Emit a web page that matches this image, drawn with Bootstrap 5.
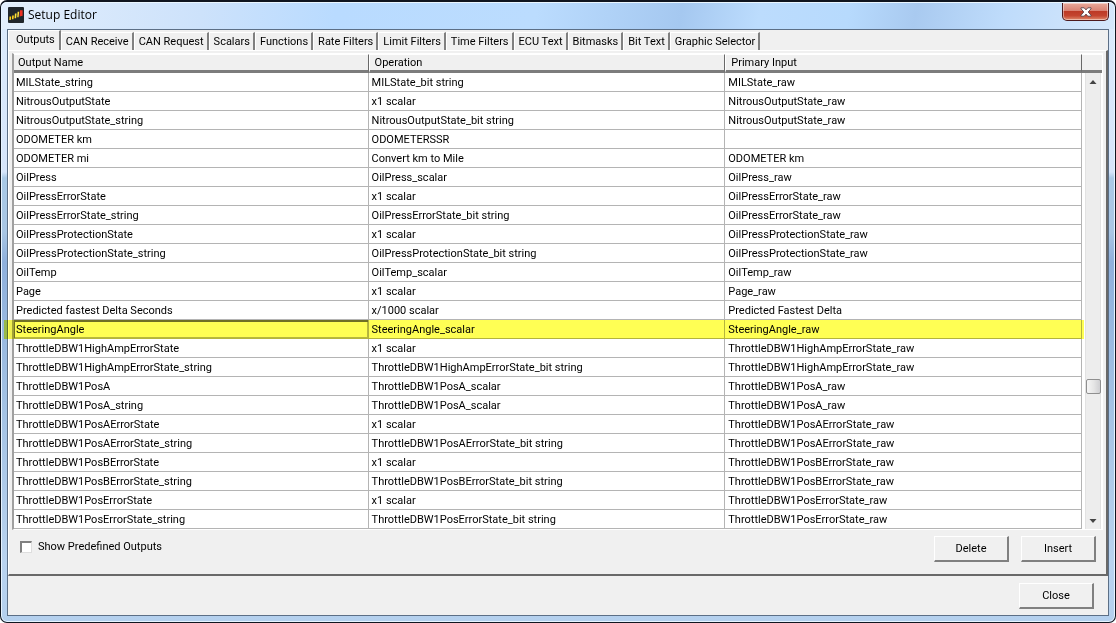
<!DOCTYPE html>
<html lang="en">
<head>
<meta charset="utf-8">
<meta name="viewport" content="width=device-width, initial-scale=1">
<title>Setup Editor</title>
<link href="https://cdn.jsdelivr.net/npm/bootstrap@5.3.0/dist/css/bootstrap.min.css" rel="stylesheet">
<style>
  :root { --face: #f0f0f0; --shade: #a0a0a0; --dark: #696969; }
  body { font: 11px/16px Roboto, "Liberation Sans", Arial, sans-serif; color: #000; background: #fff; }
  .window { border: 1px solid #10151f; border-top-width: 2px; border-radius: 7px; padding: 0 6px 6px 6px;
    background: linear-gradient(180deg, #dcebfc 0, #d6e5fa 170px, #a9c9e6 176px, #a9c6e4 230px, #8fb0dc 260px, #a3c2e4 400px, #b9d3ef 560px, #b4d0ee 100%);
    box-shadow: inset 0 0 0 1px #e6f3ff; }
  .titlebar { height: 27px; margin: 0 -5px; padding-left: 6px; border-top: 1px solid #eaf6ff;
    border-radius: 5px 5px 0 0;
    background: linear-gradient(100deg, #e2eefc 0, #cde2fb 18%, #b9dbff 30%, #bbdcfe 48%, #a5c8f0 61%, #bcdcfd 68%, #b7dafd 76%, #a9caf0 82%, #bfdcfb 90%, #d5e7fb 100%); }
  .titlebar h1 { font: 12px/16px "Open Sans", "Noto Sans", sans-serif; }
  .win-close { width: 47px; height: 18px; border: 1px solid #4d1a1d; border-top: 0; border-radius: 0 0 5px 5px; margin-right: 5px;
    background: linear-gradient(#e9a99b 0, #d98273 45%, #bd3a26 50%, #c4452f 75%, #e08b6e 100%);
    box-shadow: inset 0 0 0 1px #ffffff70; }
  .client { background: var(--face); border: 1px solid #5c6f86; }
  .tabs .nav-link { color: #000; border-radius: 0; line-height: 18px; height: 18px; padding: 0 3px 0 4px;
    border-top: 1px solid #fff; border-left: 1px solid #fff; border-right: 2px solid #808080; margin-top: 2px; }
  .tabs .nav-link.active { margin-top: 0; height: 20px; padding: 0 4px 0 7px; }
  .page { border: 1px solid #fff; border-right: 2px solid var(--dark); border-bottom: 2px solid var(--dark); padding: 2px 3px 0 3px; }
  .sheet { border: 1px solid #fff; border-left: 2px solid var(--shade); background: #fff; }
  .grid { table-layout: fixed; border-collapse: separate; border-spacing: 0; }
  .grid th, .corner { height: 19px; background: var(--face); font-weight: 400; line-height: 15px; border-top: 1px solid #fff;
    border-bottom: 3px solid #7c7c7c; }
  .grid th { padding: 0 4px; border-right: 1px solid var(--dark); }
  .grid th:first-child { width: 33.2%; }
  .grid th + th { padding-left: 5px; border-left: 1px solid #fff; }
  .grid td { height: 19px; line-height: 16px; padding: 2px 2px 0; border-right: 1px solid #b4b4b4; border-bottom: 1px solid #b4b4b4; white-space: nowrap; }
  .grid td + td { padding-left: 3px; }
  .marked { position: relative; }
  .marker { position: absolute; inset: 0 -2px 0 -10px; background: #ffff54; mix-blend-mode: multiply; pointer-events: none; }
  .grid .focus-cell { box-shadow: inset 1px 2px 0 #707070, inset -1px -1px 0 #b8b8b8; }
  .scroller { width: 20px; }
  .track { width: 16px; margin-left: 3px; background: #ededed; border-left: 1px solid #e2e2e2; border-right: 1px solid #e2e2e2; }
  .thumb { width: 15px; height: 15px; border: 1px solid #8f8f8f; border-radius: 2px; background: linear-gradient(90deg, #f5f5f5, #e6e6e6 50%, #cfcfd2); }
  .push { width: 75px; height: 26px; padding: 0; color: #000; background: var(--face); border: 1px solid; border-width: 1px 2px 2px 1px;
    border-color: #fff #808080 #808080 #fff; }
  .tick { appearance: none; width: 12px; height: 12px; margin: 0; background: #fff; border: 1px solid; border-width: 2px 1px 1px 2px;
    border-color: #808080 #dedede #dedede #808080; }
  .options { padding: 6px 7px 12px 8px; }
  .options label { gap: 6px; padding-top: 3px; }
  .footer-bar { padding: 7px 14px 5px; }
</style>
</head>
<body>
<main class="window d-flex flex-column min-vh-100">
  <header class="titlebar d-flex align-items-start">
    <svg class="me-1 mt-1" width="16" height="16" viewBox="0 0 16 16" aria-hidden="true">
      <rect width="16" height="16" rx="1" fill="#20262c"/>
      <path d="M1.500 9.500h1.700l-.4 3.500H1.300zM4.200 8.500h1.700l-.4 3.800H3.900z" fill="#ffd21c"/>
      <path d="M6.900 6.500h1.700l-.5 4.800H6.500zM9.600 4.800h1.600l-.6 5.500H9.200z" fill="#ffe23a"/>
      <path d="M12 3.300h2.600v5.500l-3 .7z" fill="#ef3124"/>
    </svg>
    <h1 class="mb-0 mt-1 me-auto">Setup Editor</h1>
    <button class="win-close p-0 d-flex align-items-center justify-content-center" type="button" aria-label="Close window">
      <svg width="12" height="10" viewBox="0 0 12 10" aria-hidden="true">
        <path d="M1 .8h3.200L6 2.900 7.800.8H11v1L8.200 5 11 8.200v1H7.800L6 7.100 4.200 9.200H1v-1L3.800 5 1 1.800z" fill="#fff" stroke="#5a4248" stroke-width=".9"/>
      </svg>
    </button>
  </header>

  <div class="client flex-grow-1">
    <ul class="nav tabs flex-nowrap text-nowrap pt-0">
      <li><a class="nav-link active" href="#outputs" aria-current="page">Outputs</a></li>
      <li><a class="nav-link" href="#can-receive">CAN Receive</a></li>
      <li><a class="nav-link" href="#can-request">CAN Request</a></li>
      <li><a class="nav-link" href="#scalars">Scalars</a></li>
      <li><a class="nav-link" href="#functions">Functions</a></li>
      <li><a class="nav-link" href="#rate-filters">Rate Filters</a></li>
      <li><a class="nav-link" href="#limit-filters">Limit Filters</a></li>
      <li><a class="nav-link" href="#time-filters">Time Filters</a></li>
      <li><a class="nav-link" href="#ecu-text">ECU Text</a></li>
      <li><a class="nav-link" href="#bitmasks">Bitmasks</a></li>
      <li><a class="nav-link" href="#bit-text">Bit Text</a></li>
      <li><a class="nav-link" href="#graphic-selector">Graphic Selector</a></li>
    </ul>

    <section class="page" id="outputs">
      <div class="sheet d-flex">
        <table class="grid flex-grow-1 w-100">
          <thead>
            <tr><th scope="col">Output Name</th><th scope="col">Operation</th><th scope="col">Primary Input</th></tr>
          </thead>
          <tbody>
            <tr><td>MILState_string</td><td>MILState_bit string</td><td>MILState_raw</td></tr>
            <tr><td>NitrousOutputState</td><td>x1 scalar</td><td>NitrousOutputState_raw</td></tr>
            <tr><td>NitrousOutputState_string</td><td>NitrousOutputState_bit string</td><td>NitrousOutputState_raw</td></tr>
            <tr><td>ODOMETER km</td><td>ODOMETERSSR</td><td></td></tr>
            <tr><td>ODOMETER mi</td><td>Convert km to Mile</td><td>ODOMETER km</td></tr>
            <tr><td>OilPress</td><td>OilPress_scalar</td><td>OilPress_raw</td></tr>
            <tr><td>OilPressErrorState</td><td>x1 scalar</td><td>OilPressErrorState_raw</td></tr>
            <tr><td>OilPressErrorState_string</td><td>OilPressErrorState_bit string</td><td>OilPressErrorState_raw</td></tr>
            <tr><td>OilPressProtectionState</td><td>x1 scalar</td><td>OilPressProtectionState_raw</td></tr>
            <tr><td>OilPressProtectionState_string</td><td>OilPressProtectionState_bit string</td><td>OilPressProtectionState_raw</td></tr>
            <tr><td>OilTemp</td><td>OilTemp_scalar</td><td>OilTemp_raw</td></tr>
            <tr><td>Page</td><td>x1 scalar</td><td>Page_raw</td></tr>
            <tr><td>Predicted fastest Delta Seconds</td><td>x/1000 scalar</td><td>Predicted Fastest Delta</td></tr>
            <tr class="marked"><td class="focus-cell">SteeringAngle<span class="marker"></span></td><td>SteeringAngle_scalar</td><td>SteeringAngle_raw</td></tr>
            <tr><td>ThrottleDBW1HighAmpErrorState</td><td>x1 scalar</td><td>ThrottleDBW1HighAmpErrorState_raw</td></tr>
            <tr><td>ThrottleDBW1HighAmpErrorState_string</td><td>ThrottleDBW1HighAmpErrorState_bit string</td><td>ThrottleDBW1HighAmpErrorState_raw</td></tr>
            <tr><td>ThrottleDBW1PosA</td><td>ThrottleDBW1PosA_scalar</td><td>ThrottleDBW1PosA_raw</td></tr>
            <tr><td>ThrottleDBW1PosA_string</td><td>ThrottleDBW1PosA_scalar</td><td>ThrottleDBW1PosA_raw</td></tr>
            <tr><td>ThrottleDBW1PosAErrorState</td><td>x1 scalar</td><td>ThrottleDBW1PosAErrorState_raw</td></tr>
            <tr><td>ThrottleDBW1PosAErrorState_string</td><td>ThrottleDBW1PosAErrorState_bit string</td><td>ThrottleDBW1PosAErrorState_raw</td></tr>
            <tr><td>ThrottleDBW1PosBErrorState</td><td>x1 scalar</td><td>ThrottleDBW1PosBErrorState_raw</td></tr>
            <tr><td>ThrottleDBW1PosBErrorState_string</td><td>ThrottleDBW1PosBErrorState_bit string</td><td>ThrottleDBW1PosBErrorState_raw</td></tr>
            <tr><td>ThrottleDBW1PosErrorState</td><td>x1 scalar</td><td>ThrottleDBW1PosErrorState_raw</td></tr>
            <tr><td>ThrottleDBW1PosErrorState_string</td><td>ThrottleDBW1PosErrorState_bit string</td><td>ThrottleDBW1PosErrorState_raw</td></tr>
          </tbody>
        </table>
        <div class="scroller d-flex flex-column flex-shrink-0" aria-hidden="true">
          <div class="corner"></div>
          <div class="track d-flex flex-column align-items-center flex-grow-1">
            <svg width="14" height="17" viewBox="0 0 14 17"><path d="M3.500 11 7 7l3.500 4z" fill="#444"/></svg>
            <span style="flex-grow:71"></span>
            <span class="thumb"></span>
            <span style="flex-grow:29"></span>
            <svg width="14" height="17" viewBox="0 0 14 17"><path d="M3.500 7 7 11l3.500-4z" fill="#444"/></svg>
          </div>
        </div>
      </div>
      <div class="options d-flex align-items-start">
        <label class="d-flex align-items-center me-auto" for="predefined">
          <input class="tick" type="checkbox" id="predefined">
          <span>Show Predefined Outputs</span>
        </label>
        <button class="push me-2" type="button">Delete</button>
        <button class="push ms-1" type="button">Insert</button>
      </div>
    </section>

    <div class="footer-bar d-flex justify-content-end">
      <button class="push" type="button">Close</button>
    </div>
  </div>
</main>
<script src="https://cdn.jsdelivr.net/npm/bootstrap@5.3.0/dist/js/bootstrap.bundle.min.js"></script>
</body>
</html>
